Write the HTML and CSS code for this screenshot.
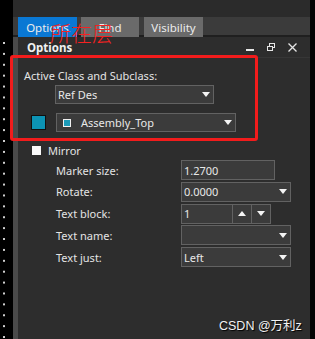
FILE: index.html
```html
<!DOCTYPE html>
<html lang="en">
<head>
    <meta charset="UTF-8">
    <meta name="viewport" content="width=device-width, initial-scale=1.0">
    <title>Options</title>
    <link rel="stylesheet" href="styles.css">
</head>
<body>
    <div class="screen">
        <div class="grid-strip"></div>
        <div class="main">
            <div class="topbar"></div>
            <div class="tabs">
                <div class="tab active">Options</div>
                <div class="tab">Find</div>
                <div class="tab">Visibility</div>
            </div>
            <div class="panel">
                <div class="panel-edge"></div>
                <div class="panel-body">
                    <div class="panel-head">
                        <span class="panel-title">Options</span>
                        <div class="head-icons">
                            <span class="ico-min"></span>
                            <svg class="ico-restore" width="8" height="8" viewBox="0 0 8 8">
                                <rect x="2.5" y="0.5" width="5" height="4" fill="none" stroke="#e6e6e6"/>
                                <rect x="0.5" y="3.5" width="5" height="4" fill="#2d2d2d" stroke="#e6e6e6"/>
                            </svg>
                            <svg class="ico-close" width="9" height="9" viewBox="0 0 9 9">
                                <path d="M0.5 0.5 L8.5 8.5 M8.5 0.5 L0.5 8.5" stroke="#e6e6e6" stroke-width="1.3"/>
                            </svg>
                        </div>
                    </div>

                    <div class="content">
                        <div class="section-label">Active Class and Subclass:</div>
                        <div class="select class-select">
                            <span>Ref Des</span>
                            <span class="arrow"></span>
                        </div>
                        <div class="subclass-row">
                            <span class="swatch"></span>
                            <div class="select subclass-select">
                                <span class="mini-swatch"></span>
                                <span>Assembly_Top</span>
                                <span class="arrow"></span>
                            </div>
                        </div>

                        <label class="check-row">
                            <span class="checkbox"></span>
                            <span>Mirror</span>
                        </label>

                        <div class="form">
                            <span class="lbl">Marker size:</span>
                            <div class="field w94"><span>1.2700</span></div>

                            <span class="lbl">Rotate:</span>
                            <div class="field select w110"><span>0.0000</span><span class="arrow"></span></div>

                            <span class="lbl">Text block:</span>
                            <div class="spin">
                                <div class="field w52"><span>1</span></div>
                                <span class="spin-btn"><span class="arrow up"></span></span>
                                <span class="spin-btn"><span class="arrow"></span></span>
                            </div>

                            <span class="lbl">Text name:</span>
                            <div class="field select w110"><span></span><span class="arrow"></span></div>

                            <span class="lbl">Text just:</span>
                            <div class="field select w110"><span>Left</span><span class="arrow"></span></div>
                        </div>
                    </div>
                </div>
            </div>
        </div>
        <div class="right-strip"></div>
    </div>

    <!-- annotation layer -->
    <div class="mark-box"></div>
    <div class="mark-text">所在层</div>
    <div class="watermark">CSDN @万利z</div>
</body>
</html>
```

FILE: styles.css
```css
body {
    margin: 0;
    width: 315px;
    height: 339px;
    overflow: hidden;
    background-color: #000;
    font-family: "Noto Sans", "Liberation Sans", sans-serif;
    font-size: 11px;
    color: #e4e4e4;
    position: relative;
}
.screen {
    display: flex;
    height: 339px;
}
.grid-strip {
    width: 13px;
    background-color: #000;
    position: relative;
}
.grid-strip::before {
    content: "";
    position: absolute;
    left: 3px;
    top: 42px;
    width: 2px;
    bottom: 0;
    background-image: linear-gradient(#d0d0d0 0 2px, transparent 2px);
    background-size: 2px 10.9px;
}
.right-strip {
    width: 5px;
    background-color: #050505;
}
.main {
    flex: 1;
    display: flex;
    flex-direction: column;
}
.topbar {
    height: 17px;
    background-color: #2b2b2b;
}
.tabs {
    height: 20px;
    display: flex;
    padding-left: 5px;
    background: linear-gradient(#3b3b3b 18px, #1f1f1f 18px);
}
.tab {
    width: 59px;
    margin-right: 4px;
    background-color: #6a6a6a;
    color: #ececec;
    display: flex;
    align-items: center;
    justify-content: center;
    font-size: 11.5px;
}
.tab:nth-child(2) {
    width: 58px;
    margin-right: 5px;
}
.tab.active {
    background-color: #0a78d4;
}
.panel {
    flex: 1;
    display: flex;
}
.panel-edge {
    width: 5px;
    background-color: #4a4a4a;
}
.panel-body {
    flex: 1;
    background-color: #2d2d2d;
}
.panel-head {
    height: 20px;
    display: flex;
    align-items: center;
    justify-content: space-between;
    padding: 0 13px 0 9px;
    border-bottom: 1px solid #363636;
}
.panel-title {
    font-weight: bold;
    font-size: 11.5px;
    color: #f0f0f0;
}
.head-icons {
    display: flex;
    align-items: center;
}
.ico-min {
    width: 8px;
    height: 2px;
    background-color: #e6e6e6;
    margin-top: 6px;
    margin-right: 13px;
}
.ico-restore {
    margin-right: 13px;
}
.content {
    padding: 10px 0 0 6px;
}
.section-label {
    height: 16px;
    line-height: 16px;
}
.select, .field {
    display: flex;
    align-items: center;
    justify-content: space-between;
    box-sizing: border-box;
    height: 19px;
    background-color: #3b3b3b;
    border: 1px solid #626262;
    padding: 0 3px 0 2px;
    color: #e8e8e8;
}
.class-select {
    width: 159px;
    margin: 1px 0 0 31px;
}
.subclass-row {
    display: flex;
    align-items: center;
    margin-top: 9px;
    margin-left: 7px;
}
.swatch {
    width: 15px;
    height: 15px;
    box-sizing: border-box;
    background-color: #0c93b4;
    border: 1px solid #101010;
    margin-right: 10px;
}
.subclass-select {
    width: 180px;
    height: 19px;
    justify-content: flex-start;
    padding-left: 6px;
}
.subclass-select .arrow {
    margin-left: auto;
}
.mini-swatch {
    width: 8px;
    height: 8px;
    box-sizing: border-box;
    border: 1px solid #f0f0f0;
    background-color: #1b9ab8;
    margin-right: 10px;
}
.arrow {
    width: 0;
    height: 0;
    border-left: 4.5px solid transparent;
    border-right: 4.5px solid transparent;
    border-top: 5px solid #f4f4f4;
}
.arrow.up {
    border-top: none;
    border-bottom: 5px solid #f4f4f4;
}
.check-row {
    display: flex;
    align-items: center;
    margin: 12px 0 0 8px;
    height: 12px;
}
.checkbox {
    width: 9px;
    height: 9px;
    background-color: #fafafa;
    margin-right: 7px;
}
.form {
    display: grid;
    grid-template-columns: 125px auto;
    row-gap: 1.75px;
    margin: 4px 0 0 32px;
    align-items: center;
}
.form .field {
    height: 20px;
}
.w94 { width: 94px; }
.w110 { width: 110px; }
.w52 { width: 52px; }
.spin {
    display: flex;
}
.spin-btn {
    width: 19px;
    height: 20px;
    box-sizing: border-box;
    background-color: #3b3b3b;
    border: 1px solid #626262;
    border-left: none;
    display: flex;
    align-items: center;
    justify-content: center;
}
.mark-box {
    position: absolute;
    left: 10px;
    top: 55px;
    width: 242px;
    height: 80px;
    border: 3px solid #f21c1c;
    border-radius: 3px;
}
.mark-text {
    position: absolute;
    left: 50px;
    top: 18px;
    font-family: "Noto Sans CJK SC", sans-serif;
    font-weight: 300;
    font-size: 21px;
    color: #f52222;
    line-height: 28px;
}
.watermark {
    position: absolute;
    left: 219px;
    top: 315px;
    font-family: "Liberation Sans", "Noto Sans CJK SC", sans-serif;
    font-size: 12.5px;
    color: #f2f2f2;
    text-shadow: 1px 1px 1px #000;
}
```
